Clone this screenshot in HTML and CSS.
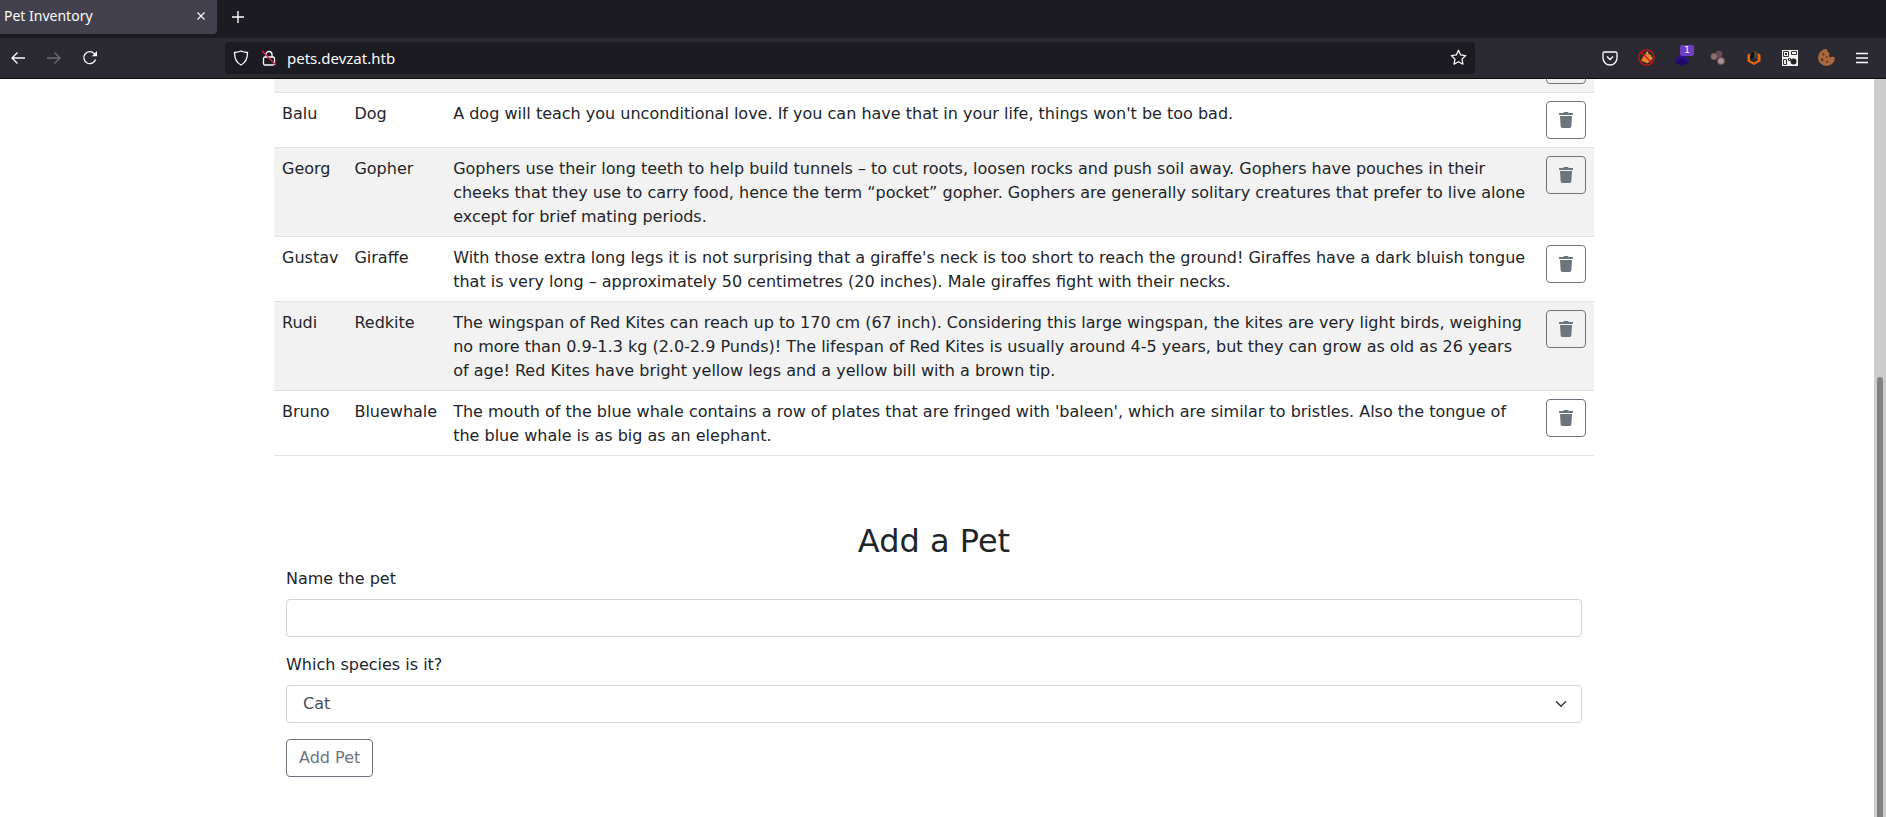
FILE: index.html
```html
<!DOCTYPE html>
<html lang="en">
<head>
    <meta charset="UTF-8">
    <title>Pet Inventory</title>
    <link rel="stylesheet" href="styles.css">
</head>
<body>
    <div class="tabbar">
        <div class="tab">
            <span class="tab-title">Pet Inventory</span>
            <svg class="tab-close" width="10" height="10" viewBox="0 0 10 10"><path d="M1.500 1.500l7 7M8.500 1.500l-7 7" stroke="#fbfbfe" stroke-width="1.100" fill="none"/></svg>
        </div>
        <svg class="tab-new" width="14" height="14" viewBox="0 0 14 14"><path d="M7 1v12M1 7h12" stroke="#fbfbfe" stroke-width="1.400" fill="none"/></svg>
    </div>
    <div class="toolbar">
        <div class="tools">
            <div class="tool"><svg width="16" height="16" viewBox="0 0 16 16"><path d="M15 8H2M7.500 2.500L2 8l5.500 5.500" stroke="#fbfbfe" stroke-width="1.300" fill="none"/></svg></div>
            <div class="tool"><svg width="16" height="16" viewBox="0 0 16 16"><path d="M1 8h13M8.500 2.500L14 8l-5.500 5.500" stroke="#6e6d76" stroke-width="1.300" fill="none"/></svg></div>
            <div class="tool"><svg width="16" height="16" viewBox="0 0 16 16"><path d="M13.600 9.500A6 6 0 1 1 12.300 3.600L14.500 5.600" stroke="#fbfbfe" stroke-width="1.300" fill="none"/><path d="M15 1v5.200H9.800z" fill="#fbfbfe"/></svg></div>
        </div>
        <div class="address">
            <svg class="addr-shield" width="16" height="16" viewBox="0 0 16 16"><path d="M8 1c2 1 4 1.400 6.500 1.500C14.500 9 12 13 8 15 4 13 1.500 9 1.500 2.500 4 2.400 6 2 8 1z" stroke="#fbfbfe" stroke-width="1.300" fill="none"/></svg>
            <svg class="addr-lock" width="16" height="16" viewBox="0 0 16 16"><path d="M5 7V4.500a3 3 0 0 1 6 0V7" stroke="#fbfbfe" stroke-width="1.300" fill="none"/><rect x="2.500" y="7" width="11" height="8" rx="1.500" stroke="#fbfbfe" stroke-width="1.300" fill="none"/><path d="M1 1l14 14" stroke="#e22850" stroke-width="1.300"/></svg>
            <span class="url">pets.devzat.htb</span>
            <svg class="addr-star" width="17" height="17" viewBox="0 0 16 16"><path d="M8 1.200l2 4.400 4.800.6-3.500 3.300.9 4.800L8 12l-4.200 2.300.9-4.800L1.200 6.200 6 5.600z" stroke="#fbfbfe" stroke-width="1.200" fill="none" stroke-linejoin="round"/></svg>
        </div>
        <div class="tools tools-right">
            <div class="tool"><svg width="16" height="16" viewBox="0 0 16 16"><path d="M2.500 2h11A1.500 1.500 0 0 1 15 3.500V8a7 7 0 0 1-14 0V3.500A1.500 1.500 0 0 1 2.500 2z" stroke="#fbfbfe" stroke-width="1.300" fill="none"/><path d="M5 6.500l3 3 3-3" stroke="#fbfbfe" stroke-width="1.300" fill="none"/></svg></div>
            <div class="tool"><svg width="17" height="17" viewBox="0 0 16 16"><circle cx="8" cy="8" r="7.200" fill="#33262c" stroke="#c8141e" stroke-width="1.300"/><path d="M3 11l2.500-5 3-2.500 4 2.500.5 4-4 3.500z" fill="#e8872a"/><path d="M7 4l2-2 1 2zM11 8l3 0-1 2z" fill="#f2b04a"/><path d="M3 3l10 10" stroke="#c8141e" stroke-width="1.300"/></svg></div>
            <div class="tool tool-badged">
                <svg width="16" height="16" viewBox="0 0 16 16"><path d="M8 4.500l7.500 5L8 14 .5 9.500z" fill="#2d0e86"/><path d="M8 8l7.500 4.500L8 16 .5 12.500z" fill="#1f0a63"/></svg>
                <span class="badge">1</span>
            </div>
            <div class="tool"><svg width="16" height="16" viewBox="0 0 16 16"><circle cx="9" cy="4" r="3" fill="#5f5156" stroke="#714a50"/><circle cx="4" cy="6.500" r="3.200" fill="#83757a" stroke="#7d4c52"/><circle cx="11" cy="11" r="3.500" fill="#9c9499" stroke="#7d4c52"/></svg></div>
            <div class="tool"><svg width="16" height="16" viewBox="0 0 16 16"><path d="M8 1l6.500 3.700v6.600L8 15l-6.500-3.700V4.700z" fill="#ee6a12"/><path d="M8 4l3.800 2.200v4.200L8 12.600l-3.800-2.200V6.200z" fill="#2b2a33"/><path d="M8 1l3.800 2.200v6.200L8 7.500z" fill="#444"/><path d="M8 1L4.200 3.200v6.200L8 7.500z" fill="#111"/></svg></div>
            <div class="tool"><svg width="16" height="16" viewBox="0 0 16 16"><rect width="16" height="16" fill="#f2f2f2"/><path d="M1.500 1.500h5v5h-5zM9.500 1.500h5v3h-5zM1.500 9.500h3v5h-3zM6.500 8.500h2v2h-2z" stroke="#333" stroke-width="1" fill="none"/><rect x="3" y="3" width="2" height="2" fill="#333"/><circle cx="11.500" cy="11.500" r="3" fill="#222"/></svg></div>
            <div class="tool"><svg width="17" height="17" viewBox="0 0 16 16"><path d="M8 0a8 8 0 1 0 8 8l-2.500-1-1.500 1-2-1.500 1-2L9.500 3z" fill="#a9683e"/><circle cx="5" cy="5" r="1" fill="#5a2f16"/><circle cx="4" cy="10" r="1.200" fill="#5a2f16"/><circle cx="8.500" cy="12" r="1" fill="#5a2f16"/><circle cx="8" cy="7.500" r=".8" fill="#5a2f16"/></svg></div>
            <div class="tool"><svg width="14" height="12" viewBox="0 0 14 12"><path d="M1 1.500h12M1 6h12M1 10.500h12" stroke="#fbfbfe" stroke-width="1.300" fill="none"/></svg></div>
        </div>
    </div>

    <div class="viewport">
        <div class="page">
            <div class="container">
                <table class="pets">
                    <tbody>
                        <tr>
                            <td>Kitty</td>
                            <td>Cat</td>
                            <td>Cats sleep a lot.</td>
                            <td class="actions"><button class="btn-del"><svg width="14" height="16" viewBox="0 0 448 512"><path d="M432 32H312l-9.400-18.700A24 24 0 0 0 281.100 0H166.800a23.720 23.720 0 0 0-21.400 13.300L136 32H16A16 16 0 0 0 0 48v32a16 16 0 0 0 16 16h416a16 16 0 0 0 16-16V48a16 16 0 0 0-16-16zM53.200 467a48 48 0 0 0 47.900 45h245.800a48 48 0 0 0 47.900-45L416 128H32z"/></svg></button></td>
                        </tr>
                        <tr>
                            <td>Balu</td>
                            <td>Dog</td>
                            <td>A dog will teach you unconditional love. If you can have that in your life, things won't be too bad.</td>
                            <td class="actions"><button class="btn-del"><svg width="14" height="16" viewBox="0 0 448 512"><path d="M432 32H312l-9.400-18.700A24 24 0 0 0 281.100 0H166.800a23.720 23.720 0 0 0-21.400 13.300L136 32H16A16 16 0 0 0 0 48v32a16 16 0 0 0 16 16h416a16 16 0 0 0 16-16V48a16 16 0 0 0-16-16zM53.200 467a48 48 0 0 0 47.900 45h245.800a48 48 0 0 0 47.900-45L416 128H32z"/></svg></button></td>
                        </tr>
                        <tr>
                            <td>Georg</td>
                            <td>Gopher</td>
                            <td>Gophers use their long teeth to help build tunnels – to cut roots, loosen rocks and push soil away. Gophers have pouches in their cheeks that they use to carry food, hence the term “pocket” gopher. Gophers are generally solitary creatures that prefer to live alone except for brief mating periods.</td>
                            <td class="actions"><button class="btn-del"><svg width="14" height="16" viewBox="0 0 448 512"><path d="M432 32H312l-9.400-18.700A24 24 0 0 0 281.100 0H166.800a23.720 23.720 0 0 0-21.400 13.300L136 32H16A16 16 0 0 0 0 48v32a16 16 0 0 0 16 16h416a16 16 0 0 0 16-16V48a16 16 0 0 0-16-16zM53.200 467a48 48 0 0 0 47.900 45h245.800a48 48 0 0 0 47.900-45L416 128H32z"/></svg></button></td>
                        </tr>
                        <tr>
                            <td>Gustav</td>
                            <td>Giraffe</td>
                            <td>With those extra long legs it is not surprising that a giraffe's neck is too short to reach the ground! Giraffes have a dark bluish tongue that is very long – approximately 50 centimetres (20 inches). Male giraffes fight with their necks.</td>
                            <td class="actions"><button class="btn-del"><svg width="14" height="16" viewBox="0 0 448 512"><path d="M432 32H312l-9.400-18.700A24 24 0 0 0 281.100 0H166.800a23.720 23.720 0 0 0-21.400 13.300L136 32H16A16 16 0 0 0 0 48v32a16 16 0 0 0 16 16h416a16 16 0 0 0 16-16V48a16 16 0 0 0-16-16zM53.200 467a48 48 0 0 0 47.900 45h245.800a48 48 0 0 0 47.900-45L416 128H32z"/></svg></button></td>
                        </tr>
                        <tr>
                            <td>Rudi</td>
                            <td>Redkite</td>
                            <td>The wingspan of Red Kites can reach up to 170 cm (67 inch). Considering this large wingspan, the kites are very light birds, weighing no more than 0.9-1.3 kg (2.0-2.9 Punds)! The lifespan of Red Kites is usually around 4-5 years, but they can grow as old as 26 years of age! Red Kites have bright yellow legs and a yellow bill with a brown tip.</td>
                            <td class="actions"><button class="btn-del"><svg width="14" height="16" viewBox="0 0 448 512"><path d="M432 32H312l-9.400-18.700A24 24 0 0 0 281.100 0H166.800a23.720 23.720 0 0 0-21.400 13.300L136 32H16A16 16 0 0 0 0 48v32a16 16 0 0 0 16 16h416a16 16 0 0 0 16-16V48a16 16 0 0 0-16-16zM53.200 467a48 48 0 0 0 47.900 45h245.800a48 48 0 0 0 47.900-45L416 128H32z"/></svg></button></td>
                        </tr>
                        <tr>
                            <td>Bruno</td>
                            <td>Bluewhale</td>
                            <td>The mouth of the blue whale contains a row of plates that are fringed with 'baleen', which are similar to bristles. Also the tongue of the blue whale is as big as an elephant.</td>
                            <td class="actions"><button class="btn-del"><svg width="14" height="16" viewBox="0 0 448 512"><path d="M432 32H312l-9.400-18.700A24 24 0 0 0 281.100 0H166.800a23.720 23.720 0 0 0-21.400 13.300L136 32H16A16 16 0 0 0 0 48v32a16 16 0 0 0 16 16h416a16 16 0 0 0 16-16V48a16 16 0 0 0-16-16zM53.200 467a48 48 0 0 0 47.900 45h245.800a48 48 0 0 0 47.900-45L416 128H32z"/></svg></button></td>
                        </tr>
                    </tbody>
                </table>

                <h2 class="form-title">Add a Pet</h2>
                <form class="add-form">
                    <label class="form-label" for="name">Name the pet</label>
                    <input class="form-control" type="text" id="name">
                    <label class="form-label" for="species">Which species is it?</label>
                    <select class="form-select" id="species">
                        <option>Cat</option>
                    </select>
                    <button class="btn-add" type="button">Add Pet</button>
                </form>
            </div>
        </div>
        <div class="scrollbar"><div class="thumb"></div></div>
    </div>
</body>
</html>
```

FILE: styles.css
```css
* {
    box-sizing: border-box;
}
body {
    margin: 0;
    height: 100vh;
    overflow: hidden;
    display: flex;
    flex-direction: column;
    background: #fff;
    color: #212529;
    font-family: "DejaVu Sans", sans-serif;
    font-size: 16px;
    line-height: 24px;
}

/* browser chrome */
.tabbar {
    height: 38px;
    flex: none;
    display: flex;
    align-items: flex-start;
    background: #1c1b22;
}
.tab {
    width: 217px;
    height: 34px;
    display: flex;
    align-items: center;
    justify-content: space-between;
    padding: 0 11px 2px 4px;
    background: #42414d;
    border-radius: 0 0 4px 0;
}
.tab-title {
    color: #fbfbfe;
    font-family: "Noto Sans", sans-serif;
    font-size: 14px;
}
.tab-new {
    margin: 10px 0 0 14px;
}
.toolbar {
    height: 41px;
    flex: none;
    display: flex;
    align-items: center;
    padding: 0 6px 1px 0;
    background: #2b2a33;
    border-bottom: 1px solid #0c0c0d;
}
.tools {
    display: flex;
}
.tools-right {
    margin-left: 117px;
}
.tool {
    width: 36px;
    height: 32px;
    display: flex;
    align-items: center;
    justify-content: center;
}
.tool-badged {
    position: relative;
}
.badge {
    position: absolute;
    top: 3px;
    left: 16px;
    width: 14px;
    height: 11px;
    background: #6b3fc4;
    border-radius: 2px;
    color: #fff;
    font-size: 9px;
    line-height: 11px;
    text-align: center;
}
.address {
    flex: 1;
    height: 32px;
    margin-left: 117px;
    display: flex;
    align-items: center;
    padding: 0 8px;
    background: #1c1b22;
    border-radius: 4px;
}
.addr-lock {
    margin-left: 12px;
}
.url {
    flex: 1;
    margin-left: 10px;
    color: #fbfbfe;
    font-family: "Noto Sans", sans-serif;
    font-size: 15px;
}

/* page */
.viewport {
    flex: 1;
    min-height: 0;
    display: flex;
}
.page {
    flex: 1;
    overflow: hidden;
}
.container {
    width: 1320px;
    margin-left: 274px;
}
.scrollbar {
    width: 12px;
    flex: none;
    padding: 298px 3px 0;
    background: #cdcdcd;
}
.thumb {
    height: 100%;
    background: #7f8283;
    border-radius: 3px 3px 0 0;
}
.pets {
    width: 100%;
    margin-top: -41px;
    border-collapse: collapse;
}
.pets td {
    padding: 9px 8px 7px;
    vertical-align: top;
    border-bottom: 1px solid #dee2e6;
}
.pets td.actions {
    padding: 8px;
}
.pets tr:nth-child(odd) td {
    background: #f2f2f2;
}
.btn-del {
    width: 40px;
    height: 38px;
    display: block;
    padding: 0;
    background: transparent;
    border: 1px solid #6c757d;
    border-radius: 4px;
    fill: #6c757d;
}
.btn-del svg {
    display: block;
    margin: 0 auto;
}
.form-title {
    margin: 66px 0 7px;
    font-size: 32px;
    font-weight: 500;
    line-height: 38px;
    text-align: center;
}
.add-form {
    display: flex;
    flex-direction: column;
    align-items: flex-start;
    padding: 0 12px;
}
.form-label {
    margin-bottom: 8px;
}
.form-control,
.form-select {
    width: 100%;
    height: 38px;
    margin-bottom: 16px;
    padding: 6px 12px;
    background-color: #fff;
    border: 1px solid #ced4da;
    border-radius: 4px;
    color: #495057;
    font: inherit;
}
.form-select {
    padding-left: 16px;
    appearance: none;
    background-image: url("data:image/svg+xml,%3csvg xmlns='http://www.w3.org/2000/svg' viewBox='0 0 16 16'%3e%3cpath fill='none' stroke='%23343a40' stroke-linecap='round' stroke-linejoin='round' stroke-width='2' d='M2 5l6 6 6-6'/%3e%3c/svg%3e");
    background-repeat: no-repeat;
    background-position: right 12px center;
    background-size: 16px 12px;
}
.btn-add {
    height: 38px;
    padding: 6px 12px;
    background: transparent;
    border: 1px solid #6c757d;
    border-radius: 4px;
    color: #6c757d;
    font: inherit;
}
```
